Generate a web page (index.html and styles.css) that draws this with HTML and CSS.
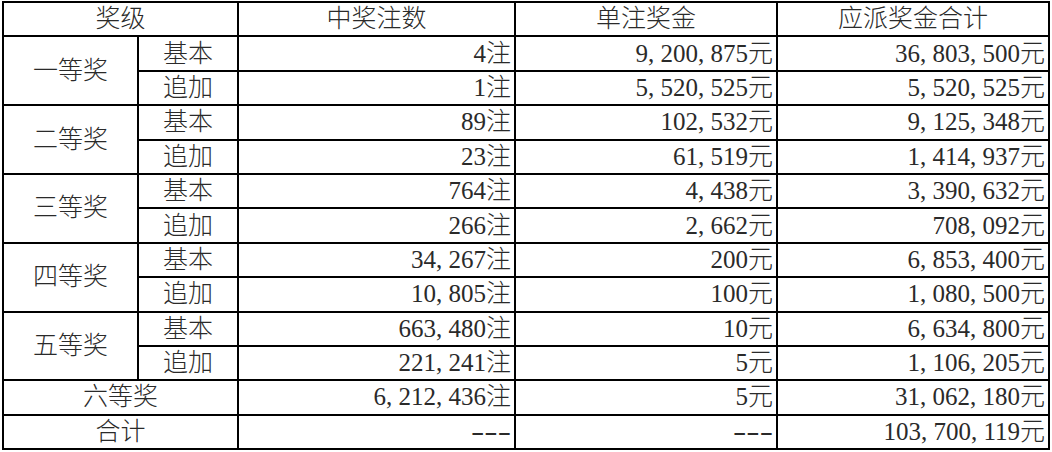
FILE: index.html
```html
<!DOCTYPE html>
<html lang="zh-CN">
<head>
<meta charset="utf-8">
<title>开奖详情</title>
<link rel="stylesheet" href="styles.css">
</head>
<body>
<table class="prize">
  <colgroup>
    <col class="c-level"><col class="c-sub"><col class="c-count"><col class="c-unit"><col class="c-total">
  </colgroup>
  <thead>
    <tr><th colspan="2">奖级</th><th>中奖注数</th><th>单注奖金</th><th>应派奖金合计</th></tr>
  </thead>
  <tbody>
    <tr><td class="lvl" rowspan="2">一等奖</td><td class="sub">基本</td><td class="num">4注</td><td class="num">9<span class="sep">,</span>200<span class="sep">,</span>875元</td><td class="num">36<span class="sep">,</span>803<span class="sep">,</span>500元</td></tr>
    <tr><td class="sub">追加</td><td class="num">1注</td><td class="num">5<span class="sep">,</span>520<span class="sep">,</span>525元</td><td class="num">5<span class="sep">,</span>520<span class="sep">,</span>525元</td></tr>
    <tr><td class="lvl" rowspan="2">二等奖</td><td class="sub">基本</td><td class="num">89注</td><td class="num">102<span class="sep">,</span>532元</td><td class="num">9<span class="sep">,</span>125<span class="sep">,</span>348元</td></tr>
    <tr><td class="sub">追加</td><td class="num">23注</td><td class="num">61<span class="sep">,</span>519元</td><td class="num">1<span class="sep">,</span>414<span class="sep">,</span>937元</td></tr>
    <tr><td class="lvl" rowspan="2">三等奖</td><td class="sub">基本</td><td class="num">764注</td><td class="num">4<span class="sep">,</span>438元</td><td class="num">3<span class="sep">,</span>390<span class="sep">,</span>632元</td></tr>
    <tr><td class="sub">追加</td><td class="num">266注</td><td class="num">2<span class="sep">,</span>662元</td><td class="num">708<span class="sep">,</span>092元</td></tr>
    <tr><td class="lvl" rowspan="2">四等奖</td><td class="sub">基本</td><td class="num">34<span class="sep">,</span>267注</td><td class="num">200元</td><td class="num">6<span class="sep">,</span>853<span class="sep">,</span>400元</td></tr>
    <tr><td class="sub">追加</td><td class="num">10<span class="sep">,</span>805注</td><td class="num">100元</td><td class="num">1<span class="sep">,</span>080<span class="sep">,</span>500元</td></tr>
    <tr><td class="lvl" rowspan="2">五等奖</td><td class="sub">基本</td><td class="num">663<span class="sep">,</span>480注</td><td class="num">10元</td><td class="num">6<span class="sep">,</span>634<span class="sep">,</span>800元</td></tr>
    <tr><td class="sub">追加</td><td class="num">221<span class="sep">,</span>241注</td><td class="num">5元</td><td class="num">1<span class="sep">,</span>106<span class="sep">,</span>205元</td></tr>
    <tr><td class="lvl" colspan="2">六等奖</td><td class="num">6<span class="sep">,</span>212<span class="sep">,</span>436注</td><td class="num">5元</td><td class="num">31<span class="sep">,</span>062<span class="sep">,</span>180元</td></tr>
    <tr><td class="lvl" colspan="2">合计</td><td class="num"><span class="dash">---</span></td><td class="num"><span class="dash">---</span></td><td class="num">103<span class="sep">,</span>700<span class="sep">,</span>119元</td></tr>
  </tbody>
</table>
</body>
</html>
```

FILE: styles.css
```css
html, body {
  margin: 0;
  padding: 0;
  background: #fff;
}

body {
  padding: 1px 0 0 2px;
}

.prize {
  border-collapse: collapse;
  table-layout: fixed;
  width: 1047px;
  font-family: "Liberation Serif", "Noto Sans CJK SC", serif;
  font-size: 25px;
  color: #2a2a2a;
}

.c-level { width: 135px; }
.c-sub { width: 100px; }
.c-count { width: 277px; }
.c-unit { width: 262px; }
.c-total { width: 272px; }

.prize th,
.prize td {
  border: 2px solid #000;
  padding: 0 4px;
  height: 34.4px;
  box-sizing: border-box;
  line-height: 30px;
  white-space: nowrap;
  font-weight: 300;
}

.prize th {
  text-align: center;
}

.prize .lvl,
.prize .sub {
  text-align: center;
}

.prize .num {
  text-align: right;
  padding-right: 3px;
}

.sep {
  display: inline-block;
  width: 0.5em;
  text-align: left;
}

.dash {
  display: inline-block;
  letter-spacing: 0;
  transform: scaleX(1.6);
  transform-origin: right center;
}
```
